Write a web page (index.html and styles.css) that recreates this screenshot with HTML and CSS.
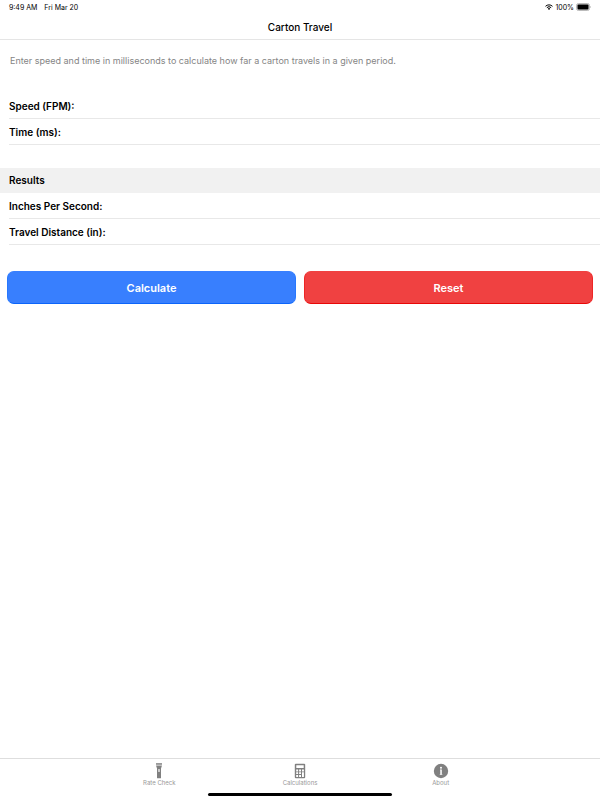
FILE: index.html
```
<!DOCTYPE html>
<html lang="en">
<head>
    <meta charset="UTF-8">
    <meta name="viewport" content="width=device-width, initial-scale=1.0">
    <title>Carton Travel</title>
    <link rel="stylesheet" href="styles.css">
</head>
<body>
    <div class="status-bar">
        <span>9:49 AM</span>
        <span>Fri Mar 20</span>
        <div class="status-right">
            <svg class="wifi" viewBox="0 0 16 12" fill="none" stroke="#000" stroke-width="2">
                <path d="M1 4.6a10 10 0 0 1 14 0M3.700 7.300a6.200 6.200 0 0 1 8.600 0"/>
                <path d="M8 11.800L5.600 9.300a3.500 3.500 0 0 1 4.800 0z" fill="#000" stroke="none"/>
            </svg>
            <span>100%</span>
            <svg class="battery" viewBox="0 0 15 8">
                <rect x="0.500" y="0.500" width="13" height="7" rx="2" fill="#ddd" stroke="#bbb"/>
                <rect x="1.500" y="1.500" width="11" height="5" rx="1"/>
                <path d="M14.300 3v2q.7-.3.7-1t-.7-1z" fill="#999"/>
            </svg>
        </div>
    </div>

    <header class="nav-bar">
        <h1>Carton Travel</h1>
    </header>

    <main>
        <p class="intro">Enter speed and time in milliseconds to calculate how far a carton travels in a given period.</p>
        <form id="travel-form">
            <div class="row">
                <label for="speed">Speed (FPM):</label>
                <input type="text" id="speed" name="speed" inputmode="decimal">
            </div>
            <div class="row">
                <label for="time">Time (ms):</label>
                <input type="text" id="time" name="time" inputmode="decimal">
            </div>

            <h2>Results</h2>
            <div class="row">
                <label for="inches">Inches Per Second:</label>
                <output id="inches"></output>
            </div>
            <div class="row">
                <label for="distance">Travel Distance (in):</label>
                <output id="distance"></output>
            </div>

            <div class="buttons">
                <button type="submit" class="calculate">Calculate</button>
                <button type="reset" class="reset">Reset</button>
            </div>
        </form>
    </main>

    <footer class="tab-bar">
        <nav class="tabs">
            <a href="#rate-check">
                <svg viewBox="0 0 16 16" fill="#808080">
                    <path d="M5 .2h6v1.500H5z"/>
                    <path d="M5 2.500h6L10 5.500v9.300q0 .5-.5.5h-3q-.5 0-.5-.5V5.500z"/>
                    <rect x="7.400" y="6" width="1.200" height="3" rx=".6" fill="#fff"/>
                </svg>
                <span>Rate Check</span>
            </a>
            <a href="#calculations">
                <svg viewBox="0 0 16 16">
                    <rect x="2.800" y=".8" width="10.400" height="14.400" rx="1" fill="#808080"/>
                    <path d="M4.300 2.300h7.400v2.700H4.300zM4.200 6.500h1.900v1.900H4.200zM7.100 6.500H9v1.900H7.100zM10 6.500h1.900v1.900H10zM4.200 9.200h1.900v1.900H4.200zM7.100 9.200H9v1.900H7.100zM4.200 12h1.900v1.900H4.200zM7.100 12H9v1.900H7.100zM10 9.200h1.900v4.700H10z" fill="#fff"/>
                </svg>
                <span>Calculations</span>
            </a>
            <a href="#about">
                <svg viewBox="0 0 16 16">
                    <circle cx="8" cy="8" r="7.200" fill="#808080"/>
                    <circle cx="8" cy="4.700" r="1" fill="#fff"/>
                    <path d="M7 6.600h1.800v4.500h.5v.6H6.800v-.6h.5V7.200H7z" fill="#fff"/>
                </svg>
                <span>About</span>
            </a>
        </nav>
        <div class="home-indicator"></div>
    </footer>

    <script>
        const form = document.getElementById("travel-form");
        form.addEventListener("submit", (e) => {
            e.preventDefault();
            // feet per minute -> inches per second
            const inches = parseFloat(form.speed.value) * 12 / 60;
            const distance = inches * parseFloat(form.time.value) / 1000;
            if (isNaN(distance)) return;
            document.getElementById("inches").value = inches.toFixed(2);
            document.getElementById("distance").value = distance.toFixed(2);
        });
    </script>
</body>
</html>
```
FILE: styles.css
```
* {
    box-sizing: border-box;
}
body {
    margin: 0;
    min-height: 100vh;
    display: flex;
    flex-direction: column;
    background: #fff;
    color: #000;
    font-family: Inter, "Liberation Sans", sans-serif;
    font-size: 10px;
}
.status-bar {
    display: flex;
    align-items: center;
    gap: 7px;
    height: 14px;
    padding: 0 9px;
    font-size: 7px;
}
.status-right {
    display: flex;
    align-items: center;
    gap: 2px;
    margin-left: auto;
}
.wifi {
    width: 8px;
    height: 6px;
}
.battery {
    width: 15px;
    height: 8px;
}
.nav-bar {
    display: flex;
    align-items: center;
    justify-content: center;
    height: 26px;
    border-bottom: 1px solid #e5e5e5;
}
h1 {
    margin: 0;
    font-size: 10px;
    font-weight: 500;
}
main {
    flex: 1;
}
.intro {
    margin: 14px 10px 25px;
    color: #858585;
    font-size: 9px;
    line-height: 14px;
}
.row {
    display: flex;
    align-items: center;
    gap: 8px;
    height: 26px;
    margin-left: 9px;
    border-bottom: 1px solid #e8e8e8;
}
.row label {
    font-weight: 600;
}
.row input {
    flex: 1;
    min-width: 0;
    height: 20px;
    padding: 0;
    border: none;
    outline: none;
    background: none;
    font: inherit;
}
h2 {
    margin: 23px 0 0;
    padding: 0 9px;
    background: #f1f1f1;
    font-size: 10px;
    font-weight: 600;
    line-height: 25px;
}
.buttons {
    display: grid;
    grid-template-columns: 1fr 1fr;
    gap: 8px;
    padding: 26px 7px;
}
.buttons button {
    height: 33px;
    padding: 0;
    border: 1px solid;
    border-radius: 7px;
    color: #fff;
    font-family: inherit;
    font-size: 11px;
    font-weight: 600;
    cursor: pointer;
}
.buttons .calculate {
    background: #387ffe;
    border-color: #387ffe #2878fe #0b65fa;
}
.buttons .reset {
    background: #f04141;
    border-color: #f04141 #ee2626 #e80808;
}
.tab-bar {
    border-top: 1px solid #dedede;
}
.tabs {
    display: grid;
    grid-template-columns: repeat(3, 1fr);
    max-width: 422px;
    height: 34px;
    margin: 0 auto;
    padding-top: 4px;
}
.tabs a {
    display: flex;
    flex-direction: column;
    align-items: center;
    color: #999;
    font-size: 6px;
    line-height: 8px;
    text-decoration: none;
}
.tabs svg {
    width: 16px;
    height: 16px;
}
.home-indicator {
    width: 184px;
    height: 3px;
    margin: 0 auto 4px;
    border-radius: 2px;
    background: #000;
}
```
